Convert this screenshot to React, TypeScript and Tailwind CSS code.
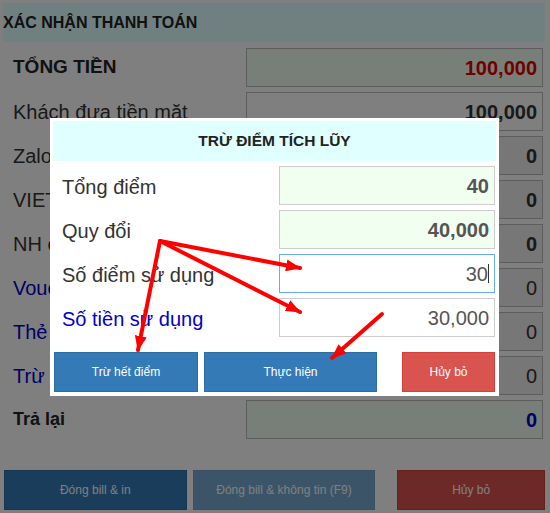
const FONT = "font-['Liberation_Sans',Arial,Helvetica,sans-serif]";

type BgRow = {
  label: string;
  value: string;
  labelClass: string;
  boxClass: string;
  valueClass: string;
};

const bgRows: BgRow[] = [
  { label: "TỔNG TIỀN", value: "100,000", labelClass: "text-[19px] font-bold text-[#222]", boxClass: "bg-[#f0fff0]", valueClass: "font-bold text-[#e00000]" },
  { label: "Khách đưa tiền mặt", value: "100,000", labelClass: "text-[20px] text-[#333]", boxClass: "bg-white", valueClass: "font-bold text-[#333]" },
  { label: "ZaloPay", value: "0", labelClass: "text-[20px] text-[#333]", boxClass: "bg-[#eeeeee]", valueClass: "font-bold text-[#333]" },
  { label: "VIETQR", value: "0", labelClass: "text-[20px] text-[#333]", boxClass: "bg-[#eeeeee]", valueClass: "font-bold text-[#333]" },
  { label: "NH chuyển khoản", value: "0", labelClass: "text-[20px] text-[#333]", boxClass: "bg-[#eeeeee]", valueClass: "font-bold text-[#333]" },
  { label: "Voucher", value: "0", labelClass: "text-[20px] text-[#0000cd]", boxClass: "bg-[#eeeeee]", valueClass: "text-[#333]" },
  { label: "Thẻ quà tặng", value: "0", labelClass: "text-[20px] text-[#0000cd]", boxClass: "bg-[#eeeeee]", valueClass: "text-[#333]" },
  { label: "Trừ điểm tích lũy", value: "0", labelClass: "text-[20px] text-[#0000cd]", boxClass: "bg-[#eeeeee]", valueClass: "text-[#333]" },
  { label: "Trả lại", value: "0", labelClass: "text-[18px] font-bold text-[#222]", boxClass: "bg-[#f0fff0]", valueClass: "font-bold text-[#0000cd]" },
];

function Arrows() {
  return (
    <svg className="absolute inset-0 pointer-events-none" width={550} height={513}>
      <defs>
        <marker id="head" viewBox="0 0 15 12" refX="14" refY="6" markerWidth="15" markerHeight="12" markerUnits="userSpaceOnUse" orient="auto">
          <path d="M0 0 L15 6 L0 12 Z" fill="#ff0000" />
        </marker>
      </defs>
      <g stroke="#ff0000" strokeWidth={4} strokeLinecap="round" fill="none">
        <line x1={160} y1={241} x2={300} y2={268} markerEnd="url(#head)" />
        <line x1={160} y1={241} x2={300} y2={312} markerEnd="url(#head)" />
        <line x1={160} y1={241} x2={138} y2={350} markerEnd="url(#head)" />
        <line x1={382} y1={314} x2={332} y2={358} markerEnd="url(#head)" />
      </g>
    </svg>
  );
}

function PointsDialog() {
  const rows = [
    { label: "Tổng điểm", value: "40", labelClass: "text-[#333]", box: "bg-[#f0fff0] border-[#cccccc]", valueClass: "font-bold" },
    { label: "Quy đổi", value: "40,000", labelClass: "text-[#333]", box: "bg-[#f0fff0] border-[#cccccc]", valueClass: "font-bold" },
    { label: "Số điểm sử dụng", value: "30", labelClass: "text-[#333]", box: "bg-white border-[#66afe9]", valueClass: "", caret: true },
    { label: "Số tiền sử dụng", value: "30,000", labelClass: "text-[#0000cd]", box: "bg-white border-[#cccccc]", valueClass: "" },
  ];

  return (
    <div className="absolute left-[50px] top-[118px] w-[449px] bg-white p-[3px] pb-[4px]">
      <div className="h-[40px] bg-[#e0ffff] flex items-center justify-center text-[15.5px] font-bold text-[#222]">
        TRỪ ĐIỂM TÍCH LŨY
      </div>
      <div className="mt-[5px] flex flex-col gap-[5px]">
        {rows.map((r) => (
          <div key={r.label} className="flex items-center">
            <div className={`w-[226px] pl-[9px] pt-[2px] text-[20px] ${r.labelClass}`}>{r.label}</div>
            <div className={`w-[216px] h-[39px] border ${r.box} flex items-center justify-end pr-[5px] text-[20px] text-[#555] ${r.valueClass}`}>
              {r.value}
              {r.caret && <span className="inline-block w-px h-[19px] bg-[#333]" />}
            </div>
          </div>
        ))}
      </div>
      <div className="mt-[15px] ml-[1px] flex text-[12px] text-white">
        <button className="w-[144px] h-[40px] bg-[#337ab7] border border-[#2e6da4]">Trừ hết điểm</button>
        <button className="ml-[6px] w-[173px] h-[40px] bg-[#337ab7] border border-[#2e6da4]">Thực hiện</button>
        <button className="ml-[25px] w-[93px] h-[40px] bg-[#d9534f] border border-[#d43f3a]">Hủy bỏ</button>
      </div>
    </div>
  );
}

export default function App() {
  return (
    <div className={`relative w-[550px] h-[513px] overflow-hidden bg-white ${FONT}`}>
      <div className="pt-[3px] pl-[3px] w-[545px]">
        <div className="h-[39px] bg-[#e0ffff] flex items-center text-[16px] font-bold text-[#222]">
          XÁC NHẬN THANH TOÁN
        </div>
        <div className="mt-[6px] flex flex-col gap-[5px]">
          {bgRows.map((r) => (
            <div key={r.label} className="flex items-center">
              <div className={`w-[243px] pl-[10px] whitespace-nowrap ${r.labelClass}`}>{r.label}</div>
              <div className={`w-[297px] h-[39px] border border-[#bbbbbb] ${r.boxClass} flex items-center justify-end pr-[5px] text-[20px] ${r.valueClass}`}>
                {r.value}
              </div>
            </div>
          ))}
        </div>
        <div className="mt-[31px] ml-[1px] flex text-[12px] text-white">
          <button className="w-[183px] h-[40px] bg-[#337ab7] border border-[#2e6da4]">Đóng bill &amp; in</button>
          <button className="ml-[6px] w-[183px] h-[40px] bg-[#337ab7] border border-[#2e6da4] opacity-65">Đóng bill &amp; không tin (F9)</button>
          <button className="ml-[22px] w-[148px] h-[40px] bg-[#d9534f] border border-[#d43f3a]">Hủy bỏ</button>
        </div>
      </div>
      <div className="absolute inset-0 bg-black/50" />
      <PointsDialog />
      <Arrows />
    </div>
  );
}
